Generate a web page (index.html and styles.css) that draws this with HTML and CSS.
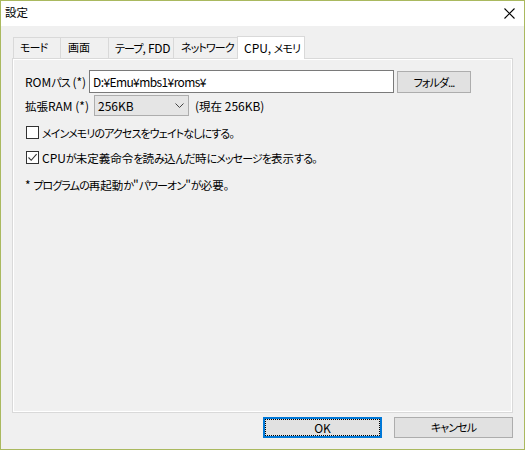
FILE: index.html
```html
<!DOCTYPE html>
<html lang="ja">
<head>
<meta charset="utf-8">
<title>設定</title>
<link rel="stylesheet" href="styles.css">
</head>
<body>
<div class="window">
  <div class="titlebar">
    <span class="title">設定</span>
    <svg class="close" width="11" height="11" viewBox="0 0 11 11"><path d="M0.5 0.5 L10.5 10.5 M10.5 0.5 L0.5 10.5" stroke="#000" stroke-width="1.1" fill="none"/></svg>
  </div>
  <div class="main">
    <div class="tabs">
      <div class="tab t1">モード</div>
      <div class="tab t2"><span class="kt">画面</span></div>
      <div class="tab t3">テープ<span class="lat">, FDD</span></div>
      <div class="tab t4">ネットワーク</div>
      <div class="tab t5 selected"><span class="lat">CPU, </span>メモリ</div>
    </div>
    <div class="panel">
      <div class="row row-rom">
        <span class="label"><span class="lat">ROM</span>パス<span class="lat"> (*)</span></span>
        <div class="input lat path">D:¥Emu¥mbs1¥roms¥</div>
        <div class="btn btn-folder">フォルダ...</div>
      </div>
      <div class="row row-ram">
        <span class="label"><span class="k">拡張</span><span class="lat">RAM (*)</span></span>
        <div class="select"><span class="lat">256KB</span>
          <svg class="chev" width="9" height="5" viewBox="0 0 9 5"><path d="M0.5 0.5 L4.5 4.5 L8.5 0.5" stroke="#444" stroke-width="1" fill="none"/></svg>
        </div>
        <span class="current"><span class="lat">(</span><span class="k">現在</span><span class="lat"> 256KB)</span></span>
      </div>
      <div class="row check-row first">
        <span class="box"></span>
        <span>メインメモリのアクセスをウェイトなしにする。</span>
      </div>
      <div class="row check-row">
        <span class="box"><svg width="11" height="11" viewBox="0 0 11 11"><path d="M1.5 5.5 L4.2 8.3 L9.6 2.2" stroke="#333" stroke-width="1.1" fill="none"/></svg></span>
        <span><span class="lat">CPU</span>が<span class="k">未定義命令</span>を<span class="k">読</span>み<span class="k">込</span>んだ<span class="k">時</span>にメッセージを<span class="k">表示</span>する。</span>
      </div>
      <div class="note"><span class="lat">* </span>プログラムの<span class="k">再起動</span>か<span class="lat">"</span>パワーオン<span class="lat">"</span>が<span class="k">必要</span>。</div>
    </div>
    <div class="buttons">
      <div class="btn btn-ok lat">OK</div>
      <div class="btn btn-cancel">キャンセル</div>
    </div>
  </div>
</div>
</body>
</html>
```
FILE: styles.css
```css
html, body {
  margin: 0;
  padding: 0;
  background: #f0f0f0;
}
body {
  font-family: "Noto Sans CJK JP", "Noto Sans", sans-serif;
  font-size: 11px;
  letter-spacing: -0.9px;
  color: #000;
  font-feature-settings: "palt";
}
.lat {
  font-size: 12px;
  letter-spacing: 0;
}
.k {
  font-size: 11.5px;
  letter-spacing: 0;
}
.kt {
  font-size: 11px;
  letter-spacing: 0;
}
.window {
  width: 525px;
  height: 450px;
  box-sizing: border-box;
  border: 1px solid #aab95f;
  background: #f0f0f0;
  display: flex;
  flex-direction: column;
}
.titlebar {
  height: 25px;
  background: #fff;
  display: flex;
  align-items: center;
  justify-content: space-between;
  padding: 0 9px 0 4px;
}
.title {
  font-size: 11.5px;
  letter-spacing: 0;
  line-height: 1;
  margin-top: -1px;
}
.close {
  display: block;
}
.main {
  flex: 1;
  display: flex;
  flex-direction: column;
  padding: 10px 11px 0 11px;
}
.tabs {
  height: 22px;
  display: flex;
  align-items: flex-end;
  padding-left: 1px;
}
.tab {
  box-sizing: border-box;
  height: 21px;
  border: 1px solid #d9d9d9;
  border-bottom: none;
  margin-right: -1px;
  background: #f0f0f0;
  padding-left: 6px;
  line-height: 19px;
  white-space: nowrap;
  overflow: hidden;
}
.t1 { width: 48px; }
.t2 { width: 49px; padding-left: 7px; }
.t3 { width: 66px; }
.t3 .lat { letter-spacing: -0.3px; }
.t4 { width: 65px; padding-left: 7px; }
.t5 { width: 68px; }
.tab.selected {
  height: 23px;
  margin-bottom: -1px;
  background: #fff;
  position: relative;
  z-index: 1;
  line-height: 21px;
}
.panel {
  height: 355px;
  box-sizing: border-box;
  border: 1px solid #d9d9d9;
  box-shadow: inset 1px 1px 0 #fff, inset -1px -1px 0 #fff;
  padding: 11px 12px 0 12px;
  display: flex;
  flex-direction: column;
}
.row {
  display: flex;
  align-items: center;
}
.label {
  white-space: nowrap;
}
.row-rom .label { width: 64px; }
.input {
  box-sizing: border-box;
  width: 305px;
  height: 23px;
  border: 1px solid #7a7a7a;
  background: #fff;
  padding-left: 3px;
  line-height: 21px;
}
.path {
  letter-spacing: -0.6px;
}
.btn {
  box-sizing: border-box;
  background: #e1e1e1;
  border: 1px solid #adadad;
  text-align: center;
}
.btn-folder {
  width: 74px;
  height: 22px;
  line-height: 20px;
  margin-left: 3px;
}
.row-ram {
  margin-top: 2px;
}
.row-ram .label { width: 69px; }
.select {
  box-sizing: border-box;
  width: 95px;
  height: 21px;
  border: 1px solid #adadad;
  background: #e5e5e5;
  display: flex;
  align-items: center;
  justify-content: space-between;
  padding: 0 4px 0 3px;
}
.chev { display: block; }
.current {
  margin-left: 6px;
}
.check-row {
  margin-top: 8px;
  height: 17px;
}
.check-row.first {
  margin-top: 8px;
}
.box {
  box-sizing: border-box;
  width: 13px;
  height: 13px;
  border: 1px solid #333;
  background: #fff;
  margin-left: 1px;
  margin-right: 3px;
  display: flex;
  align-items: center;
  justify-content: center;
}
.box svg { display: block; }
.note {
  margin-top: 10px;
}
.buttons {
  display: flex;
  justify-content: flex-end;
  gap: 12px;
  margin-top: 4px;
}
.btn-ok, .btn-cancel {
  width: 119px;
  height: 21px;
  line-height: 19px;
}
.btn-ok {
  border: 2px solid #0078d7;
  line-height: 17px;
  outline: 1px dotted #000;
  outline-offset: -3px;
}
```
